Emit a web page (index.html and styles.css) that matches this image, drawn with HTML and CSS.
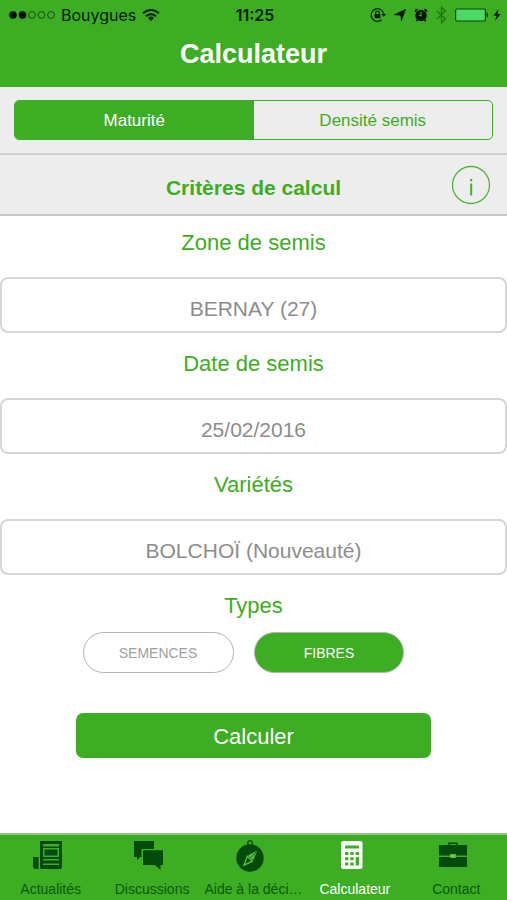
FILE: index.html
```html
<!DOCTYPE html>
<html lang="fr">
<head>
<meta charset="utf-8">
<meta name="viewport" content="width=device-width, initial-scale=1">
<title>Calculateur</title>
<link rel="stylesheet" href="styles.css">
</head>
<body>
<div class="app">
  <header class="header">
    <div class="status">
      <div class="status-left">
        <svg width="46" height="10" viewBox="0 0 46 10" fill="none" stroke="#0b3a07" aria-hidden="true"><circle cx="4" cy="5" r="3.8" fill="#031203" stroke="none"/><circle cx="13.5" cy="5" r="3.8" fill="#031203" stroke="none"/><circle cx="23" cy="5" r="3.4" stroke-width=".8"/><circle cx="32.500" cy="5" r="3.4" stroke-width=".8"/><circle cx="42" cy="5" r="3.4" stroke-width=".8"/></svg>
        <span class="carrier">Bouygues</span>
        <svg width="18" height="14" viewBox="0 0 18 14" fill="none" stroke="#052005" stroke-width="2" aria-hidden="true"><path d="M1.200 5.300a11 11 0 0 1 15.600 0M4 8.300a7 7 0 0 1 10 0"/><path d="M9 13l-3-3a4.300 4.300 0 0 1 6 0z" fill="#052005" stroke="none"/></svg>
      </div>
      <span class="clock">11:25</span>
      <div class="status-right">
        <svg width="16" height="16" viewBox="0 0 16 16" fill="none" stroke="#062806" aria-hidden="true"><path d="M13.700 7a6.300 6.300 0 1 0-2.100 5.800" stroke-width="1.200"/><path d="M11.400 7H16l-2.300 3z" fill="#062806" stroke="none"/><rect x="4.600" y="7" width="5.800" height="4.200" fill="#021402" stroke="none"/><path d="M5.700 7V5.800a1.800 1.800 0 0 1 3.600 0V7" stroke-width="1.200"/></svg>
        <svg width="12" height="12" viewBox="0 0 12 12" aria-hidden="true"><path d="M11.900.1L7.400 11.900 6.600 6.400 .1 5.800z" fill="#021402" stroke="#021402" stroke-width=".4"/></svg>
        <svg width="14" height="14" viewBox="0 0 14 14" aria-hidden="true"><circle cx="7" cy="7.500" r="5.700" fill="#021402"/><path d="M1.200 3.800a3 3 0 0 1 2.400-2.400M10.400 1.400a3 3 0 0 1 2.400 2.400M3.200 12l-.8 1.200M10.800 12l.8 1.200" stroke="#021402" stroke-width="1.600" fill="none"/><path d="M7 4.200v3.600L4.800 7" stroke="#3dad23" fill="none" stroke-width="1.200"/></svg>
        <svg width="11" height="18" viewBox="0 0 11 18" fill="none" stroke="#207216" stroke-width="1.300" aria-hidden="true"><path d="M1 5l8.500 8-4 3.800V1.200l4 3.800L1 13"/></svg>
        <svg width="34" height="14" viewBox="0 0 34 14" aria-hidden="true"><rect x=".6" y="1" width="29.800" height="12" rx="1.500" fill="#4cd964" stroke="#0c4808" stroke-width="1.200"/><path d="M31.500 4.500c2 .5 2 4.500 0 5z" fill="#062806"/></svg>
        <svg width="8" height="14" viewBox="0 0 8 14" aria-hidden="true"><path d="M5.500 1L.5 7.700h3L2 13l5.500-7H4.300z" fill="#021402"/></svg>
      </div>
    </div>
    <h1 class="title">Calculateur</h1>
  </header>

  <nav class="segments" aria-label="Type de calculateur">
    <div class="segment-group">
      <button class="segment segment-active" type="button">Maturité</button>
      <button class="segment" type="button">Densité semis</button>
    </div>
  </nav>

  <div class="criteria">
    <h2 class="criteria-title">Critères de calcul</h2>
    <button class="info" type="button" aria-label="Informations">
      <svg width="40" height="40" viewBox="0 0 40 40" aria-hidden="true"><circle cx="20" cy="20" r="18.500" fill="none" stroke="#52b33b" stroke-width="1.300"/><path d="M19.200 14h2v2.300h-2zM19.200 18.500h2v12h-2z" fill="#45af2c"/></svg>
    </button>
  </div>

  <form class="form">
    <label class="label" for="zone">Zone de semis</label>
    <select class="field" id="zone"><option>BERNAY (27)</option></select>
    <label class="label" for="date">Date de semis</label>
    <input class="field" id="date" type="text" value="25/02/2016">
    <label class="label" for="variety">Variétés</label>
    <select class="field" id="variety"><option>BOLCHOÏ (Nouveauté)</option></select>
    <div class="label" id="types">Types</div>
    <div class="types" role="group" aria-labelledby="types">
      <button class="pill" type="button" aria-pressed="false">SEMENCES</button>
      <button class="pill pill-active" type="button" aria-pressed="true">FIBRES</button>
    </div>
    <button class="submit" type="button">Calculer</button>
  </form>

  <nav class="tabs" aria-label="Navigation principale">
    <a class="tab" href="#actualites">
      <svg width="32" height="32" viewBox="0 0 32 32" aria-hidden="true"><path fill="#034a0c" fill-rule="evenodd" d="M8 1h22v26a2 2 0 0 1-2 2H9a2 2 0 0 1-1-1zM11 4v2.500h16V4zM11 8v9h16V8zM11 19v1.500h16V19zM11 23.500V25h16v-1.500z"/><path fill="#034a0c" d="M12.500 9.500h13v6h-13zM1 17h5.500v12H4a3 3 0 0 1-3-3z"/></svg>
      <span>Actualités</span>
    </a>
    <a class="tab" href="#discussions">
      <svg width="32" height="32" viewBox="0 0 32 32" aria-hidden="true"><path fill="#034a0c" d="M1 1h20v8H8.500v8H7l-3 3v-3H1z"/><path fill="#034a0c" d="M10 10.200h20V25h-2.500v5L22 25H10z"/></svg>
      <span>Discussions</span>
    </a>
    <a class="tab" href="#aide">
      <svg width="32" height="32" viewBox="0 0 32 32" aria-hidden="true"><circle cx="16" cy="3" r="2.300" fill="none" stroke="#034a0c" stroke-width="1.200"/><circle cx="16" cy="18" r="13.700" fill="#034a0c"/><path d="M23.500 10.500L19 20.500l-5-5z" fill="#5bbd3e"/><path d="M13.300 16.200l5 5-8.300 4z" fill="none" stroke="#5bbd3e" stroke-width="1.300"/><path d="M22.500 11.500l-5.500 6" stroke="#034a0c" stroke-width=".8"/></svg>
      <span>Aide à la déci…</span>
    </a>
    <a class="tab tab-active" href="#calculateur" aria-current="page">
      <svg width="32" height="32" viewBox="0 0 32 32" aria-hidden="true"><rect x="5" y="1" width="21.500" height="28" rx="2.500" fill="#fff"/><path fill="#3dad23" d="M9 5.500h14v3H9zM9 12h3.300v3H9zM14.300 12h3.300v3h-3.300zM19.700 12H23v3h-3.300zM9 17.300h3.300v3H9zM14.300 17.300h3.300v3h-3.300zM9 22.500h3.300v3H9zM14.300 22.500h3.300v3h-3.300zM19.700 17.300H23v8.200h-3.300z"/></svg>
      <span>Calculateur</span>
    </a>
    <a class="tab" href="#contact">
      <svg width="32" height="32" viewBox="0 0 32 32" aria-hidden="true"><path d="M12 5.500V3.300h8v2.200" fill="none" stroke="#034a0c" stroke-width="1.600"/><path fill="#034a0c" d="M2 5h28v10.500H19V14h-6v1.500H2zM2 17h11v1h6v-1h11v10H2z"/><path fill="#75c45c" d="M13.500 14.500h5v3h-5z"/></svg>
      <span>Contact</span>
    </a>
  </nav>
</div>
</body>
</html>
```
FILE: styles.css
```css
* {
  box-sizing: border-box;
}

body {
  margin: 0;
  background: #fff;
  color: #3dad23;
  font-family: "Liberation Sans", Arial, sans-serif;
}

button,
input,
select {
  margin: 0;
  font-family: inherit;
}

svg {
  display: block;
  flex: none;
}

.app {
  display: flex;
  flex-direction: column;
  min-height: 100vh;
}

.header {
  padding-bottom: 15px;
  background: #3dad23;
}

.status {
  display: grid;
  grid-template-columns: 1fr auto 1fr;
  align-items: center;
  height: 30px;
  padding: 0 6px 0 9px;
  color: #052005;
  font-family: Inter, sans-serif;
  font-size: 16px;
}

.status-left,
.status-right {
  display: flex;
  align-items: center;
}

.status-left {
  gap: 6px;
}

.status-right {
  justify-content: flex-end;
  gap: 8px;
}

.status-right svg:last-child {
  margin-left: -4px;
}

.clock {
  font-weight: 600;
}

.title {
  margin: 6px 0 0;
  color: #fff;
  font-size: 27px;
  font-weight: 700;
  line-height: 36px;
  text-align: center;
}

.segments {
  padding: 13px 14px;
  border-bottom: 2px solid #d0d0d0;
  background: #ededed;
}

.segment-group {
  display: flex;
  height: 40px;
  overflow: hidden;
  border: 1px solid #3dad23;
  border-radius: 5px;
}

.segment {
  flex: 1;
  padding: 1px 0 0;
  border: 0;
  background: transparent;
  color: #3dad23;
  font-size: 17px;
}

.segment-active {
  background: #3dad23;
  color: #fff;
}

.criteria {
  display: grid;
  grid-template-columns: 1fr auto 1fr;
  align-items: center;
  height: 61px;
  padding: 0 16px;
  border-bottom: 2px solid #c8c8c8;
  background: #ededed;
}

.criteria-title {
  grid-column: 2;
  margin: 6px 0 0;
  font-size: 21px;
  font-weight: 700;
  line-height: 28px;
}

.info {
  justify-self: end;
  padding: 0;
  border: 0;
  background: transparent;
}

.form {
  display: flex;
  flex: 1;
  flex-direction: column;
}

.label {
  margin: 16px 0 19px;
  font-size: 22px;
  line-height: 30px;
  text-align: center;
}

.label:first-child {
  margin-top: 12px;
}

.field {
  width: 100%;
  height: 56px;
  padding: 7px 0 0;
  border: 2px solid #d6d6d6;
  border-radius: 8px;
  appearance: none;
  background: #fff;
  color: #8c8c8c;
  font-size: 21px;
  text-align: center;
  text-align-last: center;
}

.types {
  display: flex;
  justify-content: center;
  gap: 20px;
  margin: -8px 20px 0 0;
}

.pill {
  width: 31%;
  height: 41px;
  border: 1px solid #b4b4b4;
  border-radius: 21px;
  background: #fff;
  color: #a0a0a0;
  font-size: 14px;
}

.pill-active {
  background: #3dad23;
  color: #fff;
}

.submit {
  align-self: center;
  width: 70%;
  height: 45px;
  margin: 40px 0;
  padding: 2px 0 0;
  border: 0;
  border-radius: 7px;
  background: #3dad23;
  color: #fff;
  font-size: 22px;
}

.tabs {
  display: grid;
  grid-template-columns: repeat(5, 1fr);
  height: 67px;
  border-top: 2px solid #8fc980;
  background: #3dad23;
}

.tab {
  display: flex;
  flex-direction: column;
  align-items: center;
  gap: 9px;
  padding-top: 5px;
  color: #0b5a0c;
  font-size: 14px;
  line-height: 16px;
  text-decoration: none;
  white-space: nowrap;
}

.tab svg {
  margin-right: 6px;
}

.tab-active {
  color: #fff;
}
```
